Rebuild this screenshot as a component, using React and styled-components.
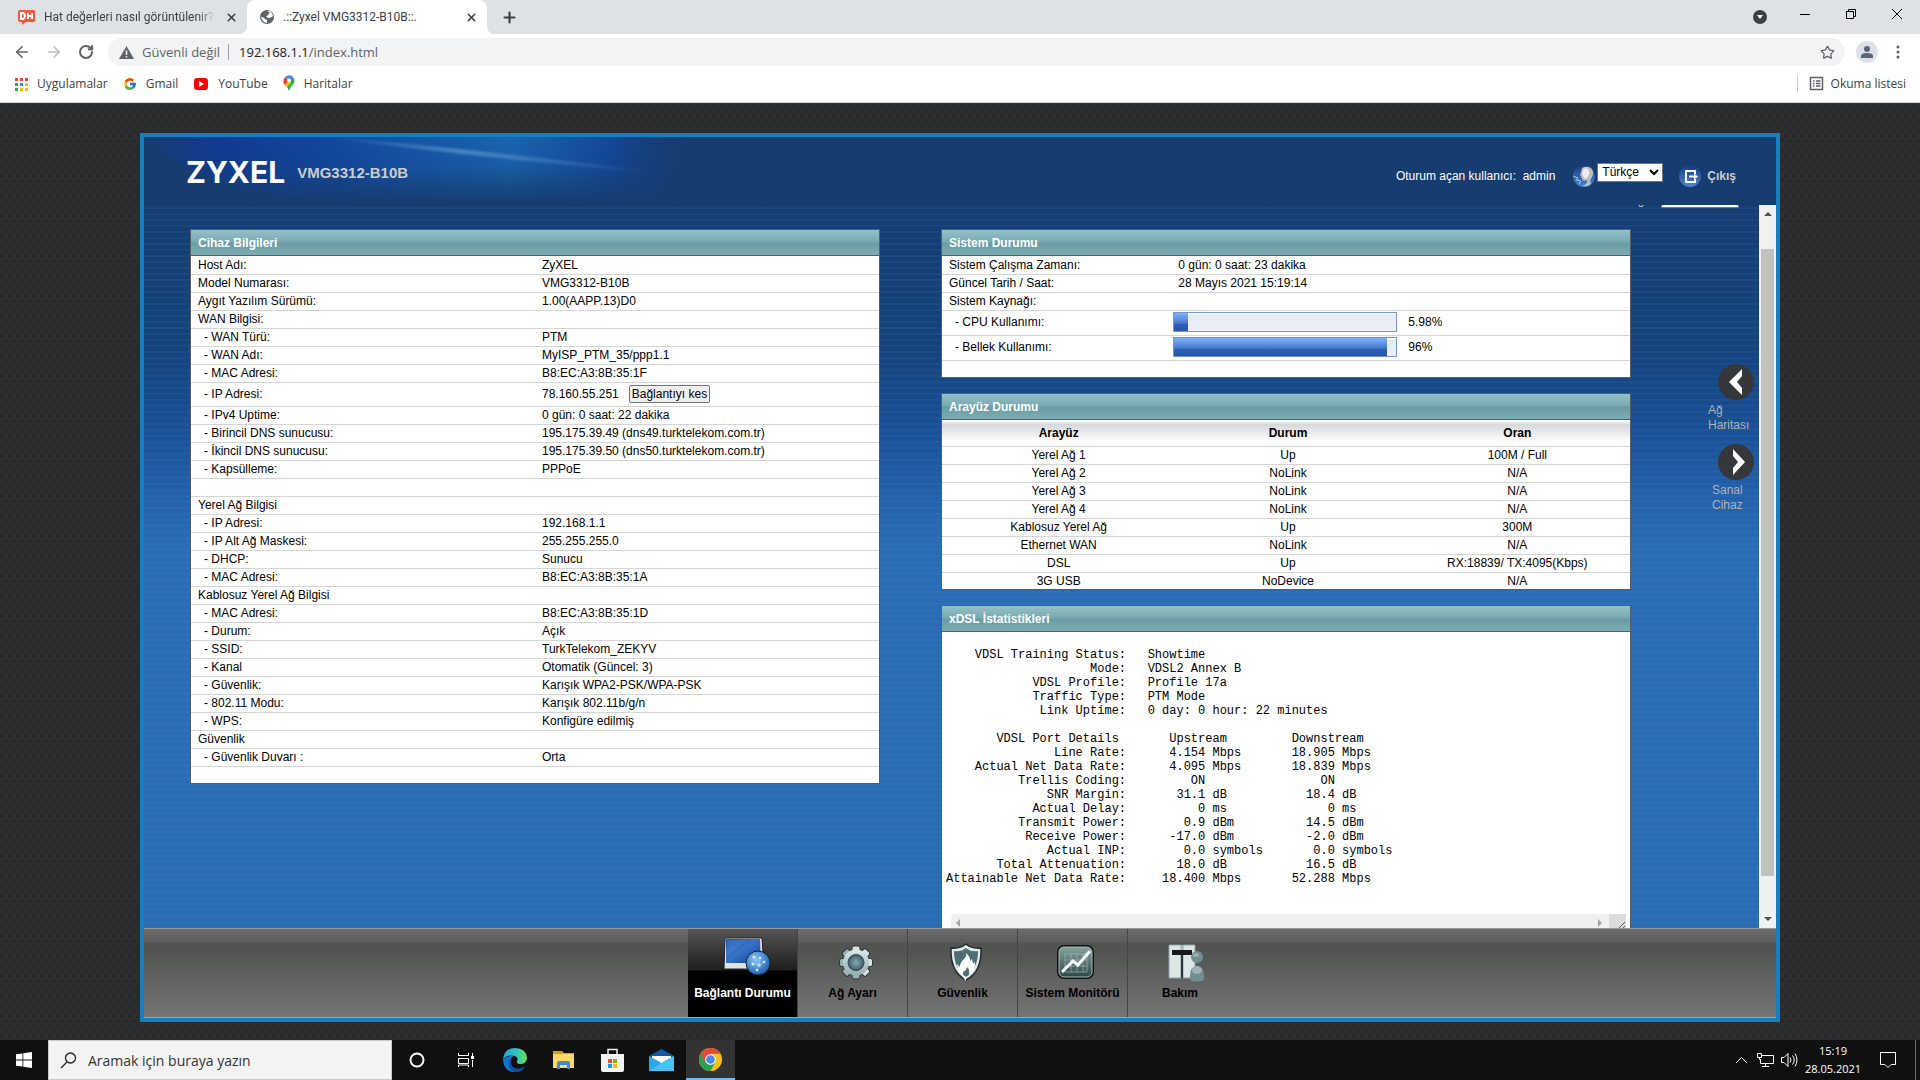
import React from 'react';
import styled, { createGlobalStyle, css } from 'styled-components';
import { ArrowLeft, ArrowRight, RotateCw, Plus, X, Star } from 'lucide-react';

const colors = {
  tabStrip: '#dee1e6',
  omnibox: '#f1f3f4',
  chromeText: '#3c4043',
  chromeMuted: '#5f6368',
  pageBg: '#2c2d2f',
  frameBorder: '#147fc1',
  panelBorder: '#595d61',
  rowBorder: '#d5d5d5',
  taskbar: '#101010'
};

const arial = `Arial, 'Liberation Sans', sans-serif`;
const segoe = `'Segoe UI', 'Open Sans', 'Noto Sans', sans-serif`;

const GlobalStyle = createGlobalStyle`
  * {
    box-sizing: border-box;
  }

  body {
    margin: 0;
    font-family: ${arial};
    font-size: 12px;
    color: #000;
  }

  button, input, select, textarea {
    font-family: inherit;
    font-size: inherit;
    margin: 0;
  }

  button {
    border: 0;
    padding: 0;
    background: none;
    color: inherit;
  }

  a {
    color: inherit;
    text-decoration: none;
  }

  svg {
    display: block;
    flex: none;
  }
`;

const Screen = styled.div`
  height: 100vh;
  display: flex;
  flex-direction: column;
  overflow: hidden;
`;

/* ---------- browser ---------- */

const Browser = styled.header`
  flex: none;
  font-family: ${segoe};
  color: ${colors.chromeText};
  background: #fff;
  border-bottom: 1px solid #d0d3d6;
`;

const TabStrip = styled.div`
  height: 34px;
  display: flex;
  align-items: center;
  background: ${colors.tabStrip};
`;

const Tab = styled.div`
  position: relative;
  width: ${props => (props.$active ? 240 : 247)}px;
  height: 34px;
  padding: 0 8px 0 ${props => (props.$active ? 12 : 18)}px;
  display: flex;
  align-items: center;
  gap: 8px;
  border-radius: 8px 8px 0 0;
  background: ${props => (props.$active ? '#fff' : 'transparent')};

  ${props => props.$active && css`
    &::before,
    &::after {
      content: '';
      position: absolute;
      bottom: 0;
      width: 8px;
      height: 8px;
    }

    &::before {
      left: -8px;
      background: radial-gradient(circle at 0 0, transparent 8px, #fff 8px);
    }

    &::after {
      right: -8px;
      background: radial-gradient(circle at 100% 0, transparent 8px, #fff 8px);
    }
  `}
`;

const TabTitle = styled.span`
  flex: 1;
  overflow: hidden;
  white-space: nowrap;
  font-family: 'Segoe UI', Roboto, sans-serif;
  font-size: 12px;
  line-height: 16px;
  mask-image: ${props => (props.$fade ? 'linear-gradient(to right, #000 90%, transparent)' : 'none')};
`;

const IconButton = styled.button`
  width: ${props => props.$width || 16}px;
  height: ${props => props.$height || 16}px;
  display: flex;
  align-items: center;
  justify-content: center;
  color: ${props => props.$color || colors.chromeText};
`;

const WindowControls = styled.div`
  margin-left: auto;
  padding: 0 0 6px;
  display: flex;
  align-items: center;
`;

const Toolbar = styled.div`
  height: 36px;
  padding: 4px 2px 4px 6px;
  display: flex;
  align-items: center;
`;

const Omnibox = styled.div`
  flex: 1;
  height: 28px;
  margin: 0 11px 0 6px;
  padding: 0 10px 0 11px;
  display: flex;
  align-items: center;
  border-radius: 14px;
  background: ${colors.omnibox};
  font-size: 13px;
  color: ${colors.chromeMuted};

  b {
    font-weight: 400;
    color: #202124;
  }
`;

const SecurityChip = styled.span`
  margin: 0 10px 0 8px;
  padding-right: 8px;
  line-height: 16px;
  border-right: 1px solid #9aa0a6;
`;

const Url = styled.span`
  flex: 1;
`;

const Bookmarks = styled.nav`
  height: 32px;
  padding: 0 14px 5px 14px;
  display: flex;
  align-items: center;
  gap: 15px;
  font-size: 12px;
`;

const Bookmark = styled.a`
  display: flex;
  align-items: center;
  gap: 9px;
`;

const ReadingList = styled.button`
  height: 17px;
  margin-left: auto;
  padding-left: 11px;
  display: flex;
  align-items: center;
  gap: 7px;
  border-left: 1px solid #c6c9cd;
`;

/* ---------- router page ---------- */

const Page = styled.main`
  flex: 1;
  min-height: 0;
  padding: 30px 140px 18px;
  display: flex;
  background-color: ${colors.pageBg};
  background-image:
    radial-gradient(ellipse 2px 3px at 2px 3px, #27282a 60%, transparent),
    radial-gradient(ellipse 2px 3px at 6px 8px, #27282a 60%, transparent),
    linear-gradient(to bottom, #2f3032, #2b2c2e);
  background-size: 8px 10px;
`;

const Frame = styled.div`
  flex: 1;
  min-width: 0;
  display: flex;
  flex-direction: column;
  border: 4px solid ${colors.frameBorder};
  background:
    repeating-linear-gradient(to bottom, rgba(255, 255, 255, 0) 0 4px, rgba(90, 170, 230, 0.07) 4px 6px),
    linear-gradient(to bottom, #173d70 0, #143f74 110px, #15427c 210px, #1a4f94 290px, #2361aa 360px, #296cb4 410px);
`;

const Header = styled.div`
  flex: none;
  position: relative;
  height: 68px;
  padding: 0 40px 0 42px;
  display: flex;
  align-items: center;
  background: #173d70;
`;

const Glow = styled.svg`
  position: absolute;
  left: 0;
  top: 0;
`;

const Logo = styled.span`
  position: relative;
  padding-top: 2px;
  font-family: Inter, sans-serif;
  font-weight: 700;
  font-size: 30px;
  line-height: 36px;
  color: #fff;
`;

const Model = styled.h1`
  position: relative;
  margin: 4px auto 0 12px;
  font-size: 15px;
  line-height: 18px;
  font-weight: 700;
  color: #ccc;
`;

const User = styled.span`
  margin: 10px 18px 0 0;
  color: #fff;
  white-space: pre;
`;

const Language = styled.select`
  width: 66px;
  height: 19px;
  margin: 2px 16px 0 2px;
  padding: 0;
  border: 1px solid #767676;
  background: #fff;
`;

const HeaderIcon = styled.span`
  margin-top: 10px;
`;

const Logout = styled.a`
  margin-top: 10px;
  display: flex;
  align-items: center;
  gap: 6px;
  font-weight: 700;
  color: #ccc;
`;

const Body = styled.div`
  flex: 1;
  min-height: 0;
  display: flex;
`;

const Content = styled.div`
  flex: 1;
  min-width: 0;
  overflow: hidden;
  padding-left: 46px;
`;

const Filter = styled.div`
  margin-top: -16px;
  margin-bottom: 21px;
  padding-right: 20px;
  display: flex;
  justify-content: flex-end;
  align-items: flex-end;
  gap: 10px;
  color: #ccc;

  label {
    line-height: 15px;
  }

  select {
    width: 78px;
    height: 19px;
    border: 1px solid #767676;
    background: #fff;
  }
`;

const Columns = styled.div`
  display: grid;
  grid-template-columns: 1fr 1fr 67px;
  column-gap: 61px;
  align-items: start;
`;

const Stack = styled.div`
  display: flex;
  flex-direction: column;
  gap: 15px;
`;

const Panel = styled.section`
  border: 1px solid ${colors.panelBorder};
  background: #fff;
`;

const PanelTitle = styled.h2`
  margin: 0;
  height: 26px;
  padding: 0 7px;
  border-bottom: 1px solid ${colors.panelBorder};
  background: linear-gradient(to bottom, #93c1c8 0, #79a9b0 48%, #6a9ba4 52%, #7badb3 100%);
  font-size: 12px;
  line-height: 26px;
  font-weight: 700;
  color: #fff;
`;

const Table = styled.table`
  width: 100%;
  table-layout: fixed;
  border-collapse: collapse;
  line-height: 16px;

  th, td {
    height: 18px;
    padding: 0 3px 0 7px;
    border-bottom: 1px solid ${colors.rowBorder};
    text-align: ${props => (props.$centered ? 'center' : 'left')};
    font-weight: 400;
  }

  tbody tr:last-child > * {
    height: 17px;
    border-bottom: 0;
  }

  thead th {
    height: 26px;
    font-weight: 700;
    background: linear-gradient(to bottom, #fff 0, #d7d8da 18%, #fff 85%);
  }
`;

const Label = styled.th`
  width: ${props => props.$width || '50%'};

  && {
    padding-left: ${props => (props.$indent ? 13 : 7)}px;
    height: ${props => props.$height || 18}px;
  }
`;

const Disconnect = styled.button`
  margin-left: 10px;
  padding: 0 2px;
  height: 18px;
  border: 1px solid #767676;
  border-radius: 2px;
  background: #efefef;
`;

const Inline = styled.div`
  display: flex;
  align-items: center;
`;

const UsageRow = styled.tr`
  && > * {
    padding-bottom: 2px;
  }
`;

const MeterCell = styled.td`
  && {
    padding-left: 2px;
  }
`;

const Meter = styled.div`
  width: 224px;
  height: 20px;
  margin-right: 11px;
  border: 1px solid #7495cc;
  background: linear-gradient(to bottom, #fff 0, #e5eaf3 12%, #edf1f5 100%);
`;

const MeterFill = styled.div`
  height: 100%;
  background: linear-gradient(to bottom, #7fb0fb 0, #5f90e0 35%, #4274c0 60%, #2b5dbb 62%, #2a56a8 100%);
`;

const StatsBox = styled.div`
  padding: 0 4px;
`;

const Stats = styled.textarea`
  display: block;
  width: 100%;
  padding: 16px 0 0;
  border: 0;
  outline: 0;
  resize: none;
  overflow: hidden;
  background: #fff;
  font-family: 'Courier New', 'Liberation Mono', monospace;
  font-size: 12px;
  line-height: 14px;
  color: #000;
`;

const HScroll = styled.div`
  height: 17px;
  margin-left: 5px;
  padding-left: 4px;
  display: flex;
  align-items: center;
  justify-content: space-between;
  background: #f0f0f0;
`;

const HScrollEnd = styled.div`
  display: flex;
  align-items: center;
  gap: 5px;
`;

const Grip = styled.div`
  width: 17px;
  height: 17px;
  background: #dcdcdc;
`;

const SideNav = styled.nav`
  padding-top: 135px;
  padding-left: 9px;
  display: flex;
  flex-direction: column;
  gap: 11px;
  color: #adb2b8;
  line-height: 15px;
`;

const SideLink = styled.a`
  width: 53px;
  display: flex;
  flex-direction: column;
  align-items: flex-end;
  gap: 3px;

  span {
    width: ${props => props.$textWidth}px;
    margin-right: auto;
    margin-left: ${props => props.$shift}px;
  }
`;

const VScroll = styled.div`
  flex: none;
  width: 17px;
  padding: 5px 2px;
  display: flex;
  flex-direction: column;
  align-items: center;
  background: #f1f1f1;
`;

const VThumb = styled.div`
  width: 13px;
  height: 88%;
  margin: 31px 0 auto;
  background: #c1c1c1;
`;

const Menu = styled.nav`
  flex: none;
  height: 90px;
  display: flex;
  justify-content: center;
  border-top: 1px solid #999;
  border-bottom: 1px solid #a4a4a4;
  background: linear-gradient(to bottom, #6c6c6c 0, #5c5c5c 13px, #505350 15px, #535653 26px, #666 58px, #757575 100%);
`;

const MenuItem = styled.a`
  width: ${props => (props.$last ? 104 : 110)}px;
  padding-top: 13px;
  display: flex;
  flex-direction: column;
  align-items: center;
  gap: 3px;
  border-right: ${props => (props.$last ? 0 : '1px solid #444')};
  font-weight: 700;
  line-height: 16px;
  color: ${props => (props.$active ? '#fff' : '#000')};
  background: ${props => (props.$active ? 'linear-gradient(to bottom, #555 0, #1e1e1e 41px, #000 42px)' : 'none')};

  svg {
    margin-left: 6px;
  }
`;

/* ---------- taskbar ---------- */

const Taskbar = styled.footer`
  flex: none;
  height: 40px;
  display: flex;
  background: ${colors.taskbar};
  color: #fff;
  font-family: ${segoe};
`;

const TaskButton = styled.button`
  width: ${props => props.$width || 49}px;
  height: 40px;
  display: flex;
  align-items: center;
  justify-content: center;
  background: ${props => (props.$active ? '#333' : 'none')};
  border-bottom: ${props => (props.$active ? '2px solid #76b9ed' : '0')};
`;

const Search = styled.label`
  width: 344px;
  padding: 0 11px;
  display: flex;
  align-items: center;
  gap: 11px;
  border: 1px solid #c8c8c8;
  background: #f3f3f3;
  color: #222;

  input {
    flex: 1;
    min-width: 0;
    padding: 0;
    border: 0;
    outline: 0;
    background: none;
    font-size: 14px;
  }

  input::placeholder {
    color: #333;
    opacity: 1;
  }
`;

const Tray = styled.div`
  margin-left: auto;
  display: flex;
  align-items: center;
`;

const Clock = styled.div`
  width: 56px;
  margin-left: 4px;
  font-size: 11px;
  line-height: 18px;
  text-align: center;
  white-space: nowrap;
`;

const ShowDesktop = styled.button`
  width: 5px;
  height: 40px;
  border-left: 1px solid #6a6a6a;
`;

/* ---------- data ---------- */

const deviceRows = [
  ['Host Adı:', 'ZyXEL'],
  ['Model Numarası:', 'VMG3312-B10B'],
  ['Aygıt Yazılım Sürümü:', '1.00(AAPP.13)D0'],
  ['WAN Bilgisi:', ''],
  ['- WAN Türü:', 'PTM'],
  ['- WAN Adı:', 'MyISP_PTM_35/ppp1.1'],
  ['- MAC Adresi:', 'B8:EC:A3:8B:35:1F'],
  ['- IP Adresi:', '78.160.55.251', 'Bağlantıyı kes'],
  ['- IPv4 Uptime:', '0 gün: 0 saat: 22 dakika'],
  ['- Birincil DNS sunucusu:', '195.175.39.49 (dns49.turktelekom.com.tr)'],
  ['- İkincil DNS sunucusu:', '195.175.39.50 (dns50.turktelekom.com.tr)'],
  ['- Kapsülleme:', 'PPPoE'],
  ['', ''],
  ['Yerel Ağ Bilgisi', ''],
  ['- IP Adresi:', '192.168.1.1'],
  ['- IP Alt Ağ Maskesi:', '255.255.255.0'],
  ['- DHCP:', 'Sunucu'],
  ['- MAC Adresi:', 'B8:EC:A3:8B:35:1A'],
  ['Kablosuz Yerel Ağ Bilgisi', ''],
  ['- MAC Adresi:', 'B8:EC:A3:8B:35:1D'],
  ['- Durum:', 'Açık'],
  ['- SSID:', 'TurkTelekom_ZEKYV'],
  ['- Kanal', 'Otomatik (Güncel: 3)'],
  ['- Güvenlik:', 'Karışık WPA2-PSK/WPA-PSK'],
  ['- 802.11 Modu:', 'Karışık 802.11b/g/n'],
  ['- WPS:', 'Konfigüre edilmiş'],
  ['Güvenlik', ''],
  ['- Güvenlik Duvarı :', 'Orta'],
  ['', '']
];

const interfaceRows = [
  ['Yerel Ağ 1', 'Up', '100M / Full'],
  ['Yerel Ağ 2', 'NoLink', 'N/A'],
  ['Yerel Ağ 3', 'NoLink', 'N/A'],
  ['Yerel Ağ 4', 'NoLink', 'N/A'],
  ['Kablosuz Yerel Ağ', 'Up', '300M'],
  ['Ethernet WAN', 'NoLink', 'N/A'],
  ['DSL', 'Up', 'RX:18839/ TX:4095(Kbps)'],
  ['3G USB', 'NoDevice', 'N/A']
];

const xdslStats = [
  '    VDSL Training Status:   Showtime',
  '                    Mode:   VDSL2 Annex B',
  '            VDSL Profile:   Profile 17a',
  '            Traffic Type:   PTM Mode',
  '             Link Uptime:   0 day: 0 hour: 22 minutes',
  '',
  '       VDSL Port Details       Upstream         Downstream',
  '               Line Rate:      4.154 Mbps       18.905 Mbps',
  '    Actual Net Data Rate:      4.095 Mbps       18.839 Mbps',
  '          Trellis Coding:         ON                ON',
  '              SNR Margin:       31.1 dB           18.4 dB',
  '            Actual Delay:          0 ms              0 ms',
  '          Transmit Power:        0.9 dBm          14.5 dBm',
  '           Receive Power:      -17.0 dBm          -2.0 dBm',
  '              Actual INP:        0.0 symbols       0.0 symbols',
  '       Total Attenuation:       18.0 dB           16.5 dB',
  'Attainable Net Data Rate:     18.400 Mbps       52.288 Mbps'
].join('\n');

/* ---------- icons ---------- */

const DhIcon = () => (
  <svg width="18" height="16" viewBox="0 0 18 16" aria-hidden="true">
    <path d="M2 1h14l1 1v10l-1 1H8l-4 3v-3H2l-2-1V2z" fill="#f0593a" />
    <path d="M3 4v6h2q2-1 2-3T5 4zM10 4v6M14 4v6M10 7h4" fill="none" stroke="#fff" strokeWidth="2" />
  </svg>
);

const GlobeIcon = () => (
  <svg width="16" height="16" viewBox="0 0 16 16" aria-hidden="true">
    <circle cx="8" cy="8" r="7" fill="#5f6368" />
    <path d="M2 8q3 0 4 2l2 1v3Q3 13 2 8zM8 2q1 1 3 1l-2 3-2 2 3 1 3-1 1-1q0-3-3-5z" fill="#fff" />
  </svg>
);

const AppsIcon = () => {
  const fills = ['#ea4335', '#ea4335', '#ea4335', '#34a853', '#4285f4', '#fbbc04', '#34a853', '#fbbc04', '#fbbc04'];
  return (
    <svg width="14" height="14" viewBox="0 0 14 14" aria-hidden="true">
      {fills.map((fill, i) => (
        <rect key={i} x={1 + (i % 3) * 5} y={1 + Math.floor(i / 3) * 5} width="3" height="3" fill={fill} />
      ))}
    </svg>
  );
};

const GoogleIcon = () => (
  <svg width="14" height="14" viewBox="0 0 48 48" aria-hidden="true">
    <path fill="#FFC107" d="M43.6 20H24v8h11.3A12 12 0 1 1 32 15l5.700-5.700A20 20 0 1 0 43.600 20z" />
    <path fill="#FF3D00" d="M6.300 14.700l6.600 4.800A12 12 0 0 1 32 15l5.700-5.700A20 20 0 0 0 6.300 14.700z" />
    <path fill="#4CAF50" d="M24 44a20 20 0 0 0 13.400-5.200l-6.200-5.200A12 12 0 0 1 12.700 28l-6.500 5A20 20 0 0 0 24 44z" />
    <path fill="#1976D2" d="M43.600 20H24v8h11.300a12 12 0 0 1-4.100 5.600l6.200 5.200C37 39.200 44 34 44 24q0-2-.4-4z" />
  </svg>
);

const YoutubeIcon = () => (
  <svg width="16" height="14" viewBox="0 0 16 14" aria-hidden="true">
    <rect x="1" y="1" width="14" height="12" rx="3" fill="#f00" />
    <path d="M6 4v6l5-3z" fill="#fff" />
  </svg>
);

const MapsIcon = () => (
  <svg width="12" height="17" viewBox="0 0 12 17" aria-hidden="true">
    <path d="M6 16Q5 12 2 9.500L9 3l2 0q1 3 0 5-4 4-5 8z" fill="#34a853" />
    <path d="M2 10L5 6l3 2-4 4z" fill="#fbbc04" />
    <path d="M1 9Q-.5 5 2 2l4 3-4 5z" fill="#ea4335" />
    <path d="M2 2Q6-1.500 10.500 2L7 6 5 4z" fill="#4285f4" />
    <circle cx="6" cy="5.500" r="2" fill="#fff" />
  </svg>
);

const ReadingIcon = () => (
  <svg width="15" height="15" viewBox="0 0 15 15" fill="none" stroke="#5f6368" aria-hidden="true">
    <rect x="1.500" y="1.500" width="12" height="12" strokeWidth="1.500" />
    <path d="M4 5h1.500M7 5h4.500M4 7.500h1.500M7 7.500h4.500M4 10h1.500M7 10h4.500" strokeWidth="1.500" />
  </svg>
);

const WarningIcon = () => (
  <svg width="15" height="13" viewBox="0 0 15 13" aria-hidden="true">
    <path d="M7.500 0L15 13H0z" fill="#5f6368" />
    <path d="M7.500 4.500V9M7.500 10v1.500" stroke="#f1f3f4" strokeWidth="1.500" />
  </svg>
);

const ProfileIcon = () => (
  <svg width="22" height="22" viewBox="0 0 22 22" aria-hidden="true">
    <circle cx="11" cy="11" r="11" fill="#dee1e6" />
    <circle cx="11" cy="8" r="3" fill="#5b6478" />
    <path d="M5 17v-2q0-3 6-3t6 3v2z" fill="#5b6478" />
  </svg>
);

const DotsIcon = () => (
  <svg width="4" height="16" viewBox="0 0 4 16" fill="#5f6368" aria-hidden="true">
    <circle cx="2" cy="3" r="1.500" />
    <circle cx="2" cy="8" r="1.500" />
    <circle cx="2" cy="13" r="1.500" />
  </svg>
);

const Arrow = ({ points, fill = '#505050' }) => (
  <svg width="8" height="8" viewBox="0 0 8 8" aria-hidden="true">
    <polygon points={points} fill={fill} />
  </svg>
);

const FaceIcon = () => (
  <svg width="22" height="22" viewBox="0 0 22 22" aria-hidden="true">
    <defs>
      <linearGradient id="orb" x1="0" y1="0" x2="0" y2="1">
        <stop offset="0" stopColor="#173a7c" />
        <stop offset="1" stopColor="#4f86d0" />
      </linearGradient>
    </defs>
    <circle cx="11" cy="11" r="11" fill="url(#orb)" />
    <path d="M9 3q3-2 7-1 5 2 4 8l-2 4-1 1 1 4q-3 3-8 2l4-3v-3l-3 1-2-2-1-3-1-1 1-3z" fill="#b9bcc1" />
    <path d="M10 5q2-3 5-1 2 2 1 6l-3 4-2-1-2-4z" fill="#ececec" />
    <path d="M0 11l5 2-2 2 5 1-2 3" fill="none" stroke="#9fc4ee" />
  </svg>
);

const LogoutIcon = () => (
  <svg width="22" height="22" viewBox="0 0 22 22" aria-hidden="true">
    <circle cx="11" cy="11" r="11" fill="url(#orb)" />
    <path d="M16 9V6H7v11h9v-3" fill="none" stroke="#fff" strokeWidth="2" />
    <path d="M10 11.500h7" stroke="#fff" strokeWidth="2" />
    <path d="M15 8.500l4 3-4 3z" fill="#fff" />
  </svg>
);

const CircleIcon = ({ path }) => (
  <svg width="36" height="36" viewBox="0 0 36 36" aria-hidden="true">
    <circle cx="18" cy="18" r="18" fill="#36373a" />
    <path d={path} fill="#fff" />
  </svg>
);

const StatusIcon = () => (
  <svg width="50" height="40" viewBox="-2 5 50 40" overflow="visible" aria-hidden="true">
    <defs>
      <linearGradient id="screen" x1="0" y1="0" x2="1" y2="1">
        <stop offset="0" stopColor="#1c4a9c" />
        <stop offset=".45" stopColor="#3673c8" />
        <stop offset="1" stopColor="#173f90" />
      </linearGradient>
      <radialGradient id="globe" cx=".4" cy=".35" r=".7">
        <stop offset="0" stopColor="#8cc4f4" />
        <stop offset="1" stopColor="#1c5bb0" />
      </radialGradient>
    </defs>
    <path d="M2 1h37l2 31H1z" fill="#e4e4e6" stroke="#222" />
    <path d="M3 2h34l1 24H3z" fill="url(#screen)" />
    <path d="M4 3h20L3 20z" fill="#5e95dc" opacity=".35" />
    <circle cx="35" cy="26" r="12" fill="url(#globe)" stroke="#123" />
    <g fill="#d9efff">
      <circle cx="31" cy="20" r="1.500" />
      <circle cx="37" cy="21" r="1.200" />
      <circle cx="30" cy="27" r="1.500" />
      <circle cx="36" cy="28" r="1.700" />
      <circle cx="41" cy="25" r="1.200" />
      <circle cx="34" cy="33" r="1.300" />
    </g>
    <path d="M31 20l5 8 5-3M30 27l6 1-2 5M37 21l-1 7" stroke="#9fd0f6" strokeWidth=".6" fill="none" />
  </svg>
);

const GearIcon = () => (
  <svg width="34" height="40" viewBox="0 0 34 40" aria-hidden="true">
    <defs>
      <radialGradient id="hub">
        <stop offset="0" stopColor="#86a9b5" />
        <stop offset="1" stopColor="#3f5d68" />
      </radialGradient>
      <linearGradient id="steel" x1="0" y1="0" x2="0" y2="1">
        <stop offset="0" stopColor="#dbe8ea" />
        <stop offset="1" stopColor="#93adb1" />
      </linearGradient>
    </defs>
    <g fill="url(#steel)" stroke="#2b3234">
      {[0, 45, 90, 135].map(angle => (
        <rect key={angle} x="13" y="4" width="8" height="33" rx="2" transform={`rotate(${angle} 17 20.500)`} />
      ))}
    </g>
    <circle cx="17" cy="20.500" r="13" fill="url(#steel)" />
    <circle cx="17" cy="20.500" r="8" fill="url(#hub)" stroke="#30454c" />
  </svg>
);

const ShieldIcon = () => (
  <svg width="36" height="40" viewBox="0 0 36 40" aria-hidden="true">
    <path d="M18 2q6 5 15 4 1 24-15 32Q2 30 3 6q9 1 15-4z" fill="#e2e9e9" stroke="#22292b" strokeWidth="1.500" />
    <path d="M18 6q5 4 12 3 0 18-12 26Q6 27 6 9q7 1 12-3z" fill="#4d6f74" />
    <path d="M18 35Q9 31 9 22l3 3q0-5 4-8 3-3 2-6 4 3 4 8l2-2q0 3 2 5l1-3q1 10-6 14 1-6-2-8-1 4-4 5-1 5 3 9z" fill="#fff" />
  </svg>
);

const MonitorIcon = () => (
  <svg width="38" height="40" viewBox="0 0 38 40" aria-hidden="true">
    <defs>
      <linearGradient id="glass" x1="0" y1="0" x2="0" y2="1">
        <stop offset="0" stopColor="#86a3a2" />
        <stop offset="1" stopColor="#2c4948" />
      </linearGradient>
    </defs>
    <rect x="0" y="3" width="37" height="34" rx="7" fill="#111" />
    <rect x="2" y="5" width="33" height="30" rx="5" fill="url(#glass)" stroke="#a9bcbc" />
    <path d="M8 12h22M8 18h22M8 24h22M8 30h22M8 12v18M14 12v18M20 12v18M26 12v18M30 12v18" stroke="#a5bcbc" strokeWidth=".6" />
    <path d="M5 30l11-11 5 4 12-14" fill="none" stroke="#fff" strokeWidth="3" />
  </svg>
);

const ToolsIcon = () => (
  <svg width="46" height="40" viewBox="-8 0 46 40" aria-hidden="true">
    <path d="M1 3h26v33H1z" fill="#c3d3d4" />
    <path d="M1 3h12v33H1zM15 3h12v33H15z" fill="#dce6e6" stroke="#8da2a4" />
    <path d="M4 8h20v5H4z" fill="#15191b" />
    <path d="M14 13v23" stroke="#26383b" strokeWidth="2" />
    <circle cx="29" cy="15" r="6" fill="#6f8f91" />
    <path d="M22 38q-1-14 7-14t7 14q-7 3-14 0z" fill="#6f8f91" />
    <ellipse cx="29" cy="28" rx="5" ry="4" fill="#b8cfd0" opacity=".6" />
    <ellipse cx="28" cy="13" rx="3" ry="2" fill="#b8cfd0" opacity=".5" />
  </svg>
);

const WindowsIcon = () => (
  <svg width="16" height="16" viewBox="0 0 16 16" fill="#fff" aria-hidden="true">
    <path d="M0 2.300L6.500 1.400V7.600H0zM7.300 1.300L16 0V7.600H7.300zM0 8.400H6.500V14.600L0 13.700zM7.300 8.400H16V16L7.300 14.700z" />
  </svg>
);

const SearchIcon = () => (
  <svg width="17" height="17" viewBox="0 0 17 17" fill="none" stroke="#222" strokeWidth="1.300" aria-hidden="true">
    <circle cx="10.500" cy="6" r="5" />
    <path d="M7 10L1 16" />
  </svg>
);

const TaskViewIcon = () => (
  <svg width="17" height="16" viewBox="0 0 17 16" fill="none" stroke="#fff" aria-hidden="true">
    <path d="M1.500 1v3M11.500 1v3M1 3.500h11M1.500 6.500h10v5h-10zM1.500 15v-2h10v2M15.500 1v3M15.500 8v7" />
    <rect x="14.500" y="4.500" width="2" height="2" fill="#fff" />
  </svg>
);

const EdgeIcon = () => (
  <svg width="24" height="24" viewBox="0 0 24 24" aria-hidden="true">
    <defs>
      <linearGradient id="edgeTop" x1="0" y1="0" x2="1" y2="0">
        <stop offset="0" stopColor="#1fa4e0" />
        <stop offset=".6" stopColor="#35c7b6" />
        <stop offset="1" stopColor="#6be04a" />
      </linearGradient>
    </defs>
    <path d="M0 12Q1 0 12 0q11 0 12 10-1 6-6 6-5 0-4-3 2-3-2-5-8-2-12 4z" fill="url(#edgeTop)" />
    <path d="M0 12q4-5 10-4-4 4-2 9 3 6 9 5l-3 2Q1 25 0 12z" fill="#1475cf" />
    <path d="M9 11q-3 4 1 8 6 4 12-1-3 7-10 6-6-2-6-8 0-4 3-5z" fill="#0c4fa0" />
  </svg>
);

const ExplorerIcon = () => (
  <svg width="22" height="20" viewBox="0 0 22 20" aria-hidden="true">
    <path d="M0 1h9l2 2h10v3H0z" fill="#d99a14" />
    <path d="M0 4h21v14H0z" fill="#fbd867" />
    <path d="M4 19v-6q0-2 2-2h9q2 0 2 2v6h-3v-4H7v4z" fill="#3b8ed6" />
  </svg>
);

const StoreIcon = () => (
  <svg width="23" height="24" viewBox="0 0 23 24" aria-hidden="true">
    <path d="M7 7V1.500h9V7" fill="none" stroke="#eee" strokeWidth="1.500" />
    <path d="M0 6h23v16q0 2-2 2H2q-2 0-2-2z" fill="#f3f3f3" />
    <path fill="#f25022" d="M7 11h4v4H7z" />
    <path fill="#7fba00" d="M12 11h4v4h-4z" />
    <path fill="#00a4ef" d="M7 16h4v4H7z" />
    <path fill="#ffb900" d="M12 16h4v4h-4z" />
  </svg>
);

const MailIcon = () => (
  <svg width="25" height="22" viewBox="0 0 25 22" aria-hidden="true">
    <path d="M0 7l12.500-7L25 7v15H0z" fill="#0f5ba8" />
    <path d="M3 7h19v7H3z" fill="#fff" />
    <path d="M0 7l12.500 7L25 7v15H0z" fill="#2aa7ea" />
    <path d="M0 22L14 13 25 7v15z" fill="#44c3f4" />
  </svg>
);

const ChromeIcon = () => (
  <svg width="23" height="23" viewBox="0 0 24 24" aria-hidden="true">
    <circle cx="12" cy="12" r="12" fill="#fbc116" />
    <path d="M1.600 6A12 12 0 0 0 12 24l5-9z" fill="#2d9f4e" />
    <path d="M1.600 6A12 12 0 0 1 22.400 6H12L7 15z" fill="#dd4b3e" />
    <circle cx="12" cy="12" r="5.500" fill="#fff" />
    <circle cx="12" cy="12" r="4.500" fill="#4a86ee" />
  </svg>
);

/* ---------- sections ---------- */

const BrowserChrome = () => (
  <Browser>
    <TabStrip>
      <Tab>
        <DhIcon />
        <TabTitle $fade>Hat değerleri nasıl görüntülenir? H</TabTitle>
        <IconButton aria-label="Sekmeyi kapat"><X size={13} strokeWidth={3} /></IconButton>
      </Tab>
      <Tab $active>
        <GlobeIcon />
        <TabTitle>.::Zyxel VMG3312-B10B::.</TabTitle>
        <IconButton aria-label="Sekmeyi kapat"><X size={13} strokeWidth={3} /></IconButton>
      </Tab>
      <IconButton $width={44} aria-label="Yeni sekme"><Plus size={17} strokeWidth={3} /></IconButton>
      <WindowControls>
        <IconButton $width={44} aria-label="Sekme ara">
          <svg width="14" height="22" viewBox="0 0 14 22">
            <circle cx="7" cy="14" r="7" fill="#3c4043" />
            <path d="M4 12h6l-3 4z" fill="#fff" />
          </svg>
        </IconButton>
        <IconButton $width={46} aria-label="Simge durumuna küçült">
          <svg width="10" height="10" viewBox="0 0 10 10"><path d="M0 5.500h10" stroke="#000" /></svg>
        </IconButton>
        <IconButton $width={46} aria-label="Geri yükle">
          <svg width="10" height="10" viewBox="0 0 10 10" fill="none" stroke="#000">
            <path d="M.5 2.500h7v7h-7zM2.500 2.500v-2h7v7h-2" />
          </svg>
        </IconButton>
        <IconButton $width={46} aria-label="Kapat">
          <svg width="10" height="10" viewBox="0 0 10 10"><path d="M0 0l10 10M10 0L0 10" stroke="#000" /></svg>
        </IconButton>
      </WindowControls>
    </TabStrip>
    <Toolbar>
      <IconButton $width={32} $color={colors.chromeMuted} aria-label="Geri"><ArrowLeft size={18} /></IconButton>
      <IconButton $width={32} $color="#babcbe" aria-label="İleri"><ArrowRight size={18} /></IconButton>
      <IconButton $width={32} $color={colors.chromeMuted} aria-label="Yenile"><RotateCw size={16} strokeWidth={3} /></IconButton>
      <Omnibox>
        <WarningIcon />
        <SecurityChip>Güvenli değil</SecurityChip>
        <Url><b>192.168.1.1</b>/index.html</Url>
        <IconButton $color={colors.chromeMuted} aria-label="Yer işareti ekle"><Star size={15} /></IconButton>
      </Omnibox>
      <IconButton $width={22} $height={22} aria-label="Profil"><ProfileIcon /></IconButton>
      <IconButton $width={40} aria-label="Menü"><DotsIcon /></IconButton>
    </Toolbar>
    <Bookmarks>
      <Bookmark href="#apps"><AppsIcon />Uygulamalar</Bookmark>
      <Bookmark href="#gmail"><GoogleIcon />Gmail</Bookmark>
      <Bookmark href="#youtube"><YoutubeIcon />YouTube</Bookmark>
      <Bookmark href="#maps"><MapsIcon />Haritalar</Bookmark>
      <ReadingList><ReadingIcon />Okuma listesi</ReadingList>
    </Bookmarks>
  </Browser>
);

const RouterHeader = () => (
  <Header>
    <Glow width="540" height="68" viewBox="0 0 540 68" aria-hidden="true">
      <defs>
        <linearGradient id="glow" x1="0" y1="0" x2="1" y2="0">
          <stop offset="0" stopColor="#123a94" stopOpacity="0" />
          <stop offset=".14" stopColor="#123a94" />
          <stop offset=".35" stopColor="#1248a0" />
          <stop offset=".68" stopColor="#1a66b2" />
          <stop offset=".86" stopColor="#14489c" />
          <stop offset="1" stopColor="#143d84" stopOpacity="0" />
        </linearGradient>
        <linearGradient id="fade" x1="0" y1="0" x2=".04" y2="1">
          <stop offset="0" stopColor="#fff" />
          <stop offset=".45" stopColor="#fff" stopOpacity=".8" />
          <stop offset="1" stopColor="#fff" stopOpacity="0" />
        </linearGradient>
        <mask id="glowMask">
          <path d="M0 0h540v68H240Q60 60 0 0z" fill="url(#fade)" />
        </mask>
        <linearGradient id="streak" x1="0" y1="0" x2="1" y2="0">
          <stop offset="0" stopColor="#7fb8e6" stopOpacity="0" />
          <stop offset=".4" stopColor="#7fb4e2" stopOpacity=".45" />
          <stop offset="1" stopColor="#7fb8e6" stopOpacity="0" />
        </linearGradient>
        <filter id="soft"><feGaussianBlur stdDeviation="1" /></filter>
      </defs>
      <rect width="540" height="68" fill="url(#glow)" mask="url(#glowMask)" />
      <path d="M180 0q120 8 340 36-180-14-340-36z" fill="url(#streak)" filter="url(#soft)" />
    </Glow>
    <Logo>ZYXEL</Logo>
    <Model>VMG3312-B10B</Model>
    <User>{'Oturum açan kullanıcı:  admin'}</User>
    <HeaderIcon><FaceIcon /></HeaderIcon>
    <Language aria-label="Dil" defaultValue="tr">
      <option value="tr">Türkçe</option>
    </Language>
    <Logout href="#logout"><LogoutIcon />Çıkış</Logout>
  </Header>
);

const DevicePanel = () => (
  <Panel>
    <PanelTitle>Cihaz Bilgileri</PanelTitle>
    <Table>
      <tbody>
        {deviceRows.map(([label, value, action], i) => (
          <tr key={i}>
            <Label scope="row" $indent={label.startsWith('-')} $height={action ? 24 : i === deviceRows.length - 1 ? 17 : 18}>{label}</Label>
            <td>{action ? <Inline>{value}<Disconnect>{action}</Disconnect></Inline> : value}</td>
          </tr>
        ))}
      </tbody>
    </Table>
  </Panel>
);

const Usage = ({ label, percent }) => (
  <UsageRow>
    <Label scope="row" $indent $height={25}>{label}</Label>
    <MeterCell>
      <Inline>
        <Meter><MeterFill style={{ width: `${percent}%` }} /></Meter>
        {percent}%
      </Inline>
    </MeterCell>
  </UsageRow>
);

const SystemPanel = () => (
  <Panel>
    <PanelTitle>Sistem Durumu</PanelTitle>
    <Table>
      <tbody>
        <tr><Label scope="row" $width="33.33%">Sistem Çalışma Zamanı:</Label><td>0 gün: 0 saat: 23 dakika</td></tr>
        <tr><Label scope="row">Güncel Tarih / Saat:</Label><td>28 Mayıs 2021 15:19:14</td></tr>
        <tr><Label scope="row">Sistem Kaynağı:</Label><td /></tr>
        <Usage label="- CPU Kullanımı:" percent={5.98} />
        <Usage label="- Bellek Kullanımı:" percent={96} />
        <tr><td /><td /></tr>
      </tbody>
    </Table>
  </Panel>
);

const InterfacePanel = () => (
  <Panel>
    <PanelTitle>Arayüz Durumu</PanelTitle>
    <Table $centered>
      <thead>
        <tr><th>Arayüz</th><th>Durum</th><th>Oran</th></tr>
      </thead>
      <tbody>
        {interfaceRows.map(([name, status, rate]) => (
          <tr key={name}><td>{name}</td><td>{status}</td><td>{rate}</td></tr>
        ))}
      </tbody>
    </Table>
  </Panel>
);

const XdslPanel = () => (
  <Panel>
    <PanelTitle>xDSL İstatistikleri</PanelTitle>
    <StatsBox>
      <Stats aria-label="xDSL İstatistikleri" rows={19} wrap="off" readOnly value={xdslStats} />
      <HScroll>
        <Arrow points="5,0 5,8 1,4" fill="#a3a3a3" />
        <HScrollEnd>
          <Arrow points="2,0 2,8 6,4" fill="#a3a3a3" />
          <Grip>
            <svg width="17" height="17" viewBox="0 0 17 17"><path d="M10 14l6-6M14 14l2-2" stroke="#555" /></svg>
          </Grip>
        </HScrollEnd>
      </HScroll>
    </StatsBox>
  </Panel>
);

const menu = [
  ['Bağlantı Durumu', StatusIcon],
  ['Ağ Ayarı', GearIcon],
  ['Güvenlik', ShieldIcon],
  ['Sistem Monitörü', MonitorIcon],
  ['Bakım', ToolsIcon]
];

const WindowsTaskbar = () => (
  <Taskbar>
    <TaskButton $width={48} aria-label="Başlat"><WindowsIcon /></TaskButton>
    <Search>
      <SearchIcon />
      <input type="text" aria-label="Ara" placeholder="Aramak için buraya yazın" />
    </Search>
    <TaskButton aria-label="Cortana">
      <svg width="16" height="16" viewBox="0 0 16 16"><circle cx="8" cy="8" r="6.500" fill="none" stroke="#fff" strokeWidth="2" /></svg>
    </TaskButton>
    <TaskButton aria-label="Görev görünümü"><TaskViewIcon /></TaskButton>
    <TaskButton aria-label="Edge"><EdgeIcon /></TaskButton>
    <TaskButton aria-label="Dosya Gezgini"><ExplorerIcon /></TaskButton>
    <TaskButton aria-label="Mağaza"><StoreIcon /></TaskButton>
    <TaskButton aria-label="Posta"><MailIcon /></TaskButton>
    <TaskButton $active aria-label="Chrome"><ChromeIcon /></TaskButton>
    <Tray>
      <TaskButton $width={24} aria-label="Gizli simgeler">
        <svg width="13" height="8" viewBox="0 0 13 8"><path d="M1 7l5.500-5.500L12 7" fill="none" stroke="#fff" /></svg>
      </TaskButton>
      <TaskButton $width={24} aria-label="Ağ">
        <svg width="17" height="14" viewBox="0 0 17 14" fill="none" stroke="#fff">
          <path d="M5 2.500h11.500v8H3.500V6M8.500 10.500v3M5 13.500h7M.5.500h4v4h-4zM2.500 4.500v2h1" />
        </svg>
      </TaskButton>
      <TaskButton $width={24} aria-label="Ses">
        <svg width="17" height="16" viewBox="0 0 17 16" fill="none" stroke="#fff">
          <path d="M.5 5.500h2.500l4-4v13l-4-4H.5zM9 5.500q2 2.500 0 5M11.500 3.500q3.500 4.500 0 9M14 1.500q4 6.500 0 13" />
        </svg>
      </TaskButton>
      <Clock>15:19<br />28.05.2021</Clock>
      <TaskButton $width={54} aria-label="Bildirimler">
        <svg width="16" height="17" viewBox="0 0 16 17"><path d="M.5.500h15v12H11l-3 3-3-3H.5z" fill="none" stroke="#fff" /></svg>
      </TaskButton>
      <ShowDesktop aria-label="Masaüstünü göster" />
    </Tray>
  </Taskbar>
);

export default function App() {
  return (
    <Screen>
      <GlobalStyle />
      <BrowserChrome />
      <Page>
        <Frame>
          <RouterHeader />
          <Body>
            <Content>
              <Filter>
                <label htmlFor="refresh">Yenileme Aralığı:</label>
                <select id="refresh"><option>Yok</option></select>
              </Filter>
              <Columns>
                <DevicePanel />
                <Stack>
                  <SystemPanel />
                  <InterfacePanel />
                  <XdslPanel />
                </Stack>
                <SideNav>
                  <SideLink href="#map" $textWidth={44} $shift={7}>
                    <CircleIcon path="M24 5v7l-5 6 5 6v7L11 18z" />
                    <span>Ağ Haritası</span>
                  </SideLink>
                  <SideLink href="#virtual" $textWidth={34} $shift={11}>
                    <CircleIcon path="M15 5v7l5 6-5 6v7l12-13z" />
                    <span>Sanal Cihaz</span>
                  </SideLink>
                </SideNav>
              </Columns>
            </Content>
            <VScroll>
              <Arrow points="0,6 8,6 4,2" />
              <VThumb />
              <Arrow points="0,2 8,2 4,6" />
            </VScroll>
          </Body>
          <Menu>
            {menu.map(([label, Icon], i) => (
              <MenuItem key={label} href={`#menu-${i}`} $active={i === 0} $last={i === menu.length - 1}>
                <Icon />
                {label}
              </MenuItem>
            ))}
          </Menu>
        </Frame>
      </Page>
      <WindowsTaskbar />
    </Screen>
  );
}
